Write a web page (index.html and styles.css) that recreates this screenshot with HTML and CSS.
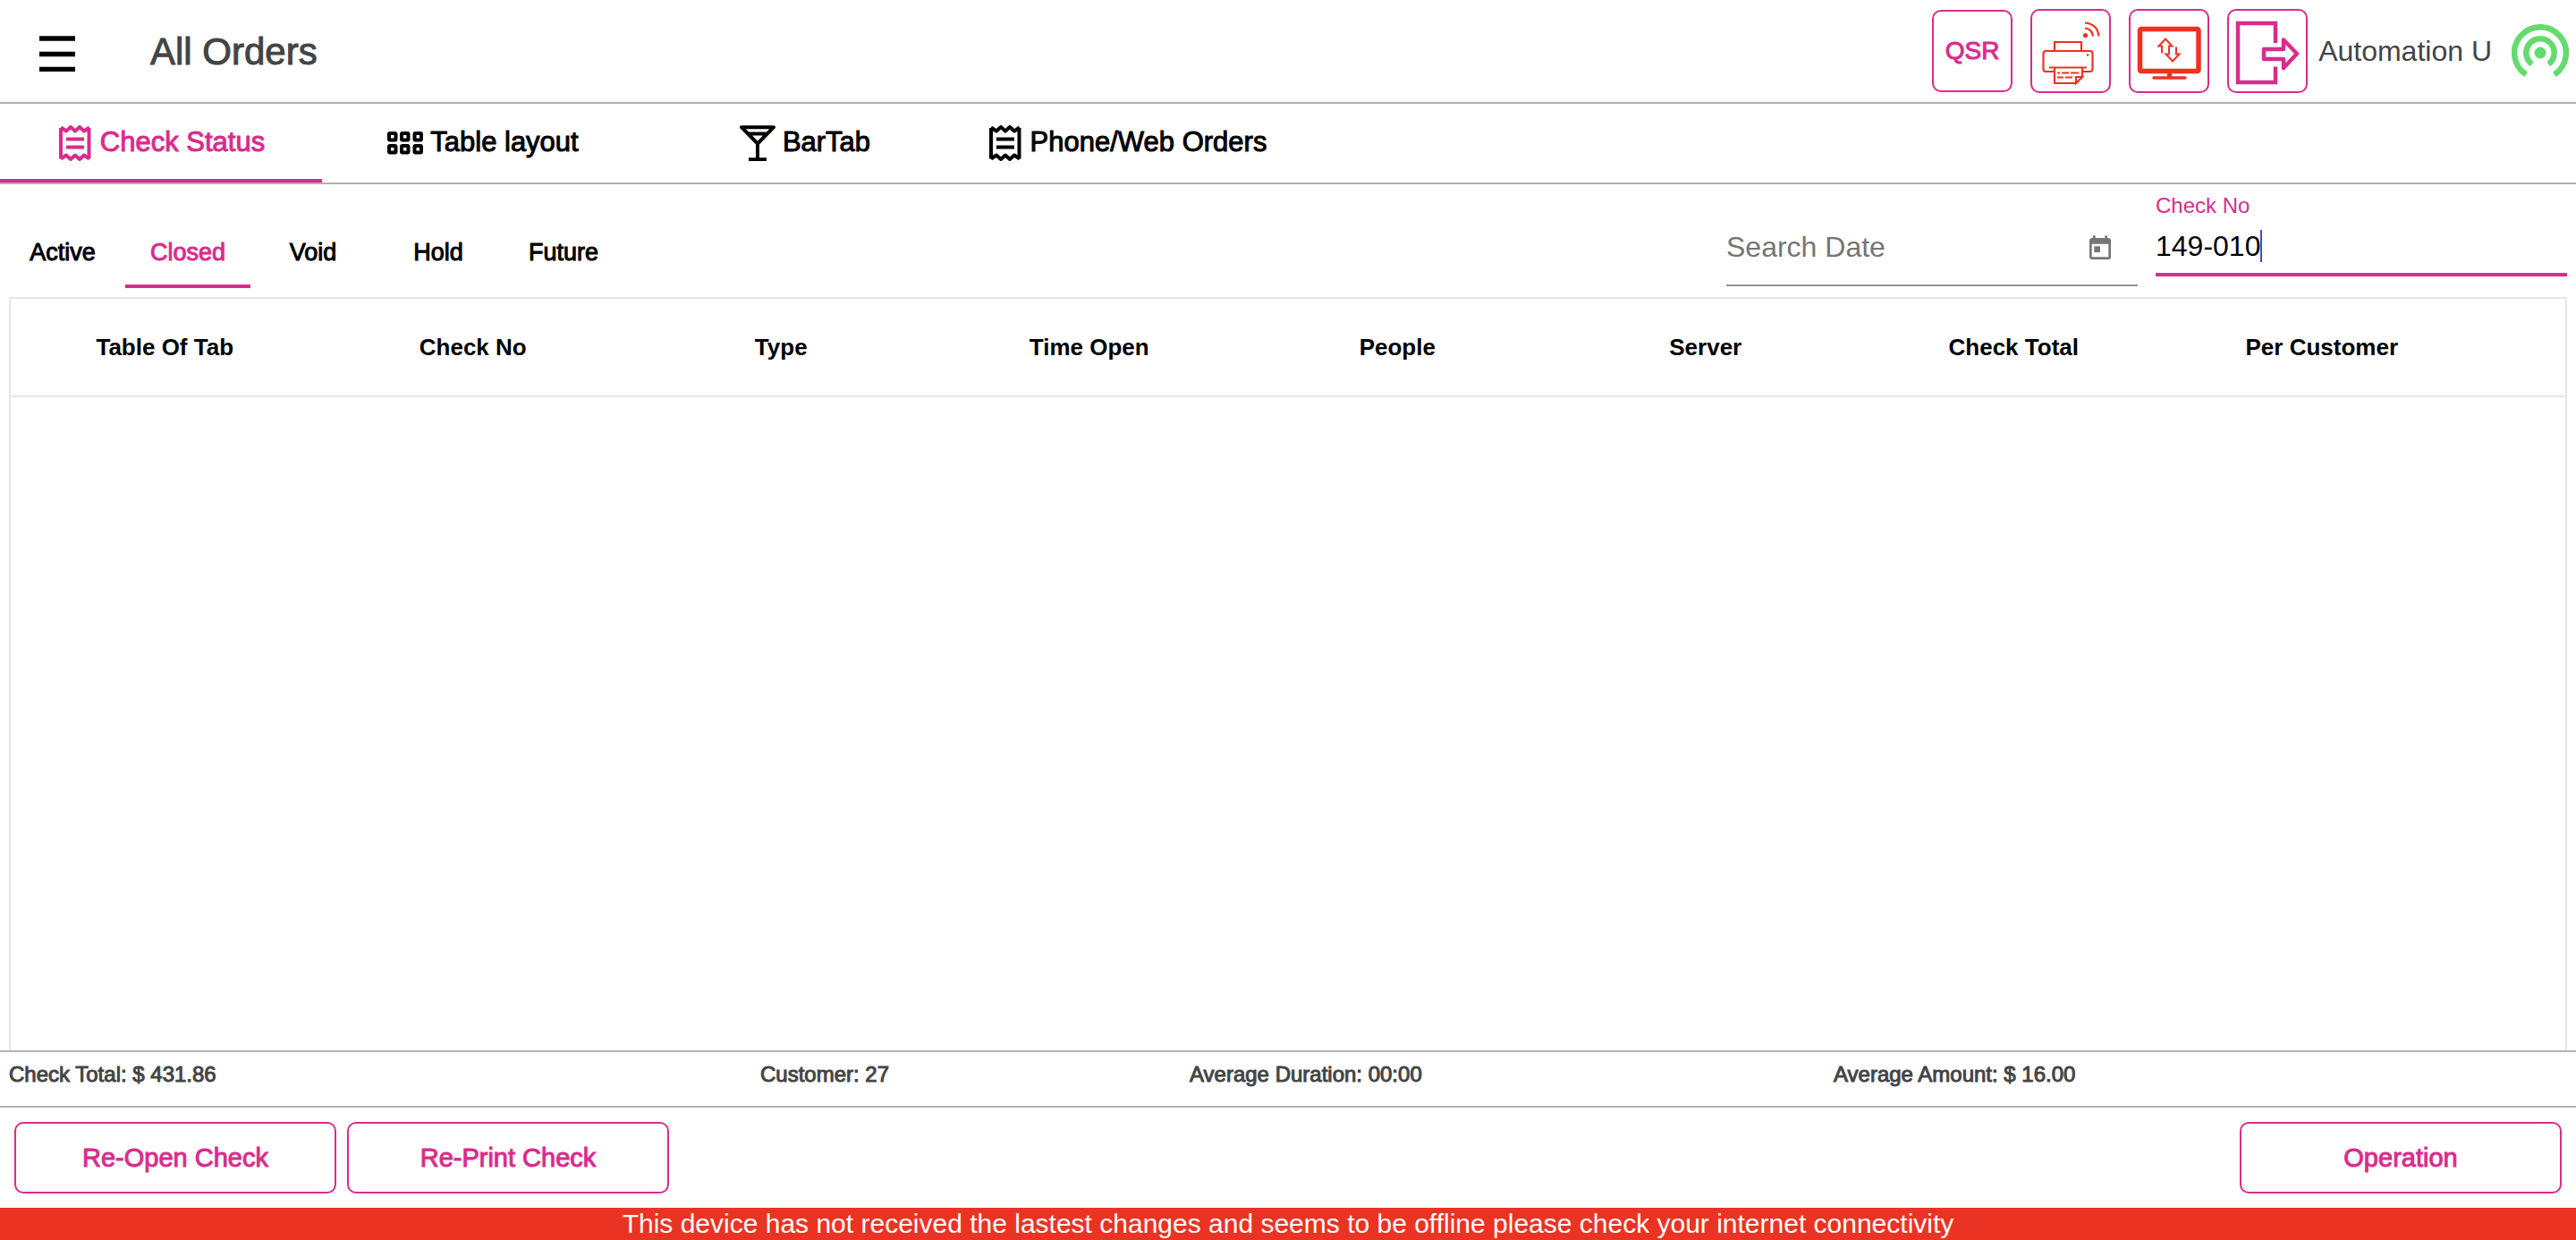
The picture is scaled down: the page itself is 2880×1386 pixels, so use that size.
FILE: index.html
```html
<!DOCTYPE html>
<html lang="en">
<head>
<meta charset="utf-8">
<meta name="viewport" content="width=device-width, initial-scale=1">
<title>All Orders</title>
<link rel="stylesheet" href="styles.css">
</head>
<body>
<svg class="sprite" aria-hidden="true">
  <symbol id="receipt" viewBox="0 0 40 40">
    <path d="M4 3v34.500M35.500 3v34.500" fill="none" stroke="currentColor" stroke-width="4"/>
    <path d="M4 2.500l6 4 5-4.500 5 4.500 5-4.500 5 4.500 6-4M4 37.500l6-4 5 4.500 5-4.500 5 4.500 5-4.500 6 4" fill="none" stroke="currentColor" stroke-width="4" stroke-linejoin="round"/>
    <path d="M10 15.500h20M10 24.500h20" stroke="currentColor" stroke-width="4"/>
  </symbol>
</svg>
<div class="app">
  <header class="topbar">
    <button class="menu" type="button" aria-label="Menu">
      <svg width="40" height="40" viewBox="0 0 40 40"><path d="M0 3h40M0 20.500h40M0 37.500h40" stroke="#000" stroke-width="5.500"/></svg>
    </button>
    <h1 class="title">All Orders</h1>
    <div class="tools">
      <button class="tool tool-text" type="button">QSR</button>
      <button class="tool" type="button" aria-label="Printer">
        <svg width="86" height="90" viewBox="2 2 86 90" fill="none" stroke="#ed3223" stroke-width="2.200">
          <path d="M27 47V37h30v10M28 70H17q-2.500 0-2.500-3V50q0-3 3-3h49q3 0 3 3v17q0 3-3 3h-9M21 65.500h42M27 66v17h24l7-7V66M51 83v-7h7z"/>
          <path d="M30 71.500h3M35 71.500h8M45 71.500h9M30 76.500h7M39 76.500h8" />
          <circle cx="64" cy="51.500" r="1.300" fill="#ed3223" stroke="none"/>
          <circle cx="61.500" cy="29.500" r="2.600" fill="#ed3223" stroke="none"/>
          <path d="M61 21.500q8 1 9 9M61 15.500q14 1 15.500 15"/>
        </svg>
      </button>
      <button class="tool" type="button" aria-label="Sync display">
        <svg width="86" height="90" viewBox="2 2 86 90" fill="none" stroke="#ed3223">
          <rect x="12.500" y="22.500" width="65.500" height="47" rx="1.500" stroke-width="5.500"/>
          <path d="M45.500 71v6" stroke-width="5"/>
          <path d="M28 77h35" stroke-width="3.500" stroke-linecap="round"/>
          <path d="M37 49.500v-8h-3.500l7.500-8 7.500 8H45v9h-3.500l7.500 8 7.500-8H53v-8" stroke-width="2"/>
        </svg>
      </button>
      <button class="tool" type="button" aria-label="Sign out">
        <svg width="86" height="90" viewBox="2 2 86 90" fill="none" stroke="#d92c8c" stroke-width="4.500">
          <path d="M54 38V16H12v66h42V64.500"/>
          <path d="M41 45h22V34.500L78 50 63 66V56H41z" stroke-linejoin="round"/>
        </svg>
      </button>
      <span class="user">Automation U</span>
      <svg class="signal" width="64" height="64" viewBox="0 0 64 64" fill="none" stroke="#64db6f" stroke-width="6.500">
        <circle cx="32" cy="32" r="6.500" fill="#64db6f" stroke="none"/>
        <path d="M22.800 44.600A15.700 15.700 0 1 1 41.200 44.600M16.200 56.300A28.900 28.900 0 1 1 47.800 56.300"/>
      </svg>
    </div>
  </header>

  <nav class="tabs">
    <a class="tab active" href="#status"><svg width="40" height="40"><use href="#receipt"/></svg>Check Status</a>
    <a class="tab" href="#layout"><svg width="40" height="40" viewBox="0 0 40 40" fill="none" stroke="currentColor" stroke-width="4"><rect x="2" y="9" width="7.500" height="7.500" rx="1"/><rect x="16" y="9" width="7.500" height="7.500" rx="1"/><rect x="30.500" y="9" width="7.500" height="7.500" rx="1"/><rect x="2" y="23" width="7.500" height="7.500" rx="1"/><rect x="16" y="23" width="7.500" height="7.500" rx="1"/><rect x="30.500" y="23" width="7.500" height="7.500" rx="1"/></svg>Table layout</a>
    <a class="tab" href="#bar"><svg width="40" height="40" viewBox="0 0 40 40" fill="none" stroke="currentColor" stroke-width="4" stroke-linejoin="round"><path d="M2 2.200h36L20 20.500zM8.500 9.500h23M20 20v18M10 38.200h20"/></svg>BarTab</a>
    <a class="tab" href="#phone"><svg width="40" height="40"><use href="#receipt"/></svg>Phone/Web Orders</a>
  </nav>

  <main class="content">
    <div class="filters">
      <nav class="subtabs">
        <a class="subtab" href="#active">Active</a>
        <a class="subtab active" href="#closed">Closed</a>
        <a class="subtab" href="#void">Void</a>
        <a class="subtab" href="#hold">Hold</a>
        <a class="subtab" href="#future">Future</a>
      </nav>
      <div class="search">
        <div class="field date-field">
          <input class="input" type="text" placeholder="Search Date" aria-label="Search Date">
          <button class="calendar" type="button" aria-label="Open calendar">
            <svg width="32" height="32" viewBox="0 0 24 24" fill="#757575"><path d="M19 3h-1V1h-2v2H8V1H6v2H5c-1.110 0-1.990.9-1.990 2L3 19c0 1.100.89 2 2 2h14c1.100 0 2-.9 2-2V5c0-1.100-.9-2-2-2zm0 16H5V8h14v11zM7 10h5v5H7z"/></svg>
          </button>
        </div>
        <div class="field check-field">
          <label class="label" for="check-no">Check No</label>
          <div class="entry"><input class="input fit" id="check-no" type="text" value="149-010"><span class="caret"></span></div>
        </div>
      </div>
    </div>

    <div class="list">
      <table class="orders">
        <thead>
          <tr>
            <th>Table Of Tab</th><th>Check No</th><th>Type</th><th>Time Open</th><th>People</th><th>Server</th><th>Check Total</th><th>Per Customer</th><td class="spacer"></td>
          </tr>
        </thead>
      </table>
    </div>
  </main>

  <section class="totals">
    <span>Check Total: $ 431.86</span>
    <span>Customer: 27</span>
    <span>Average Duration: 00:00</span>
    <span>Average Amount: $ 16.00</span>
  </section>

  <footer class="actions">
    <button class="action" type="button">Re-Open Check</button>
    <button class="action" type="button">Re-Print Check</button>
    <button class="action last" type="button">Operation</button>
  </footer>

  <p class="offline" role="alert">This device has not received the lastest changes and seems to be offline please check your internet connectivity</p>
</div>
</body>
</html>
```
FILE: styles.css
```css
* {
  box-sizing: border-box;
}

:root {
  --pink: #d92c8c;
  --line: #b0b0b0;
  --pale: #e6e6e6;
  --ink: #444;
}

body {
  margin: 0;
  background: #fff;
  color: #000;
  font-family: "Liberation Sans", Arial, sans-serif;
}

button {
  padding: 0;
  border: 0;
  background: none;
  color: inherit;
  font: inherit;
}

a {
  color: inherit;
  text-decoration: none;
}

svg {
  display: block;
  flex: none;
}

.sprite {
  position: absolute;
  width: 0;
  height: 0;
}

.app {
  display: flex;
  flex-direction: column;
  min-height: 100vh;
}

.topbar {
  display: flex;
  align-items: center;
  height: 116px;
  padding: 0 8px 0 44px;
  border-bottom: 2px solid var(--line);
}

.menu {
  margin-top: 6px;
}

.title {
  margin: 2px 0 0 84px;
  color: var(--ink);
  font-size: 42px;
  font-weight: 500;
  -webkit-text-stroke: 1px currentColor;
}

.tools {
  display: flex;
  align-items: center;
  gap: 20px;
  margin-left: auto;
}

.tool {
  width: 90px;
  height: 94px;
  border: 2px solid var(--pink);
  border-radius: 10px;
}

.tool-text {
  height: 92px;
  color: var(--pink);
  font-size: 28px;
  -webkit-text-stroke: 1px currentColor;
}

.user {
  margin-left: -8px;
  color: var(--ink);
  font-size: 32px;
}

.signal {
  margin: 4px 0 0 2px;
}

.tabs {
  display: flex;
  height: 90px;
  border-bottom: 2px solid var(--line);
}

.tab {
  display: flex;
  align-items: center;
  justify-content: center;
  gap: 8px;
  width: 360px;
  padding-top: 2px;
  border-bottom: 4px solid transparent;
  font-size: 31px;
  -webkit-text-stroke: 1px currentColor;
}

.tab svg {
  margin-top: 2px;
}

.tab.active,
.subtab.active {
  border-color: var(--pink);
  color: var(--pink);
}

.content {
  display: flex;
  flex: 1;
  flex-direction: column;
  padding: 0 10px;
}

.filters {
  display: flex;
  justify-content: space-between;
  height: 126px;
}

.subtabs {
  display: flex;
  align-self: flex-end;
  margin: 0 0 10px -10px;
}

.subtab {
  width: 140px;
  height: 80px;
  border-bottom: 4px solid transparent;
  font-size: 27px;
  line-height: 80px;
  text-align: center;
  -webkit-text-stroke: 1px currentColor;
}

.search {
  display: flex;
  align-items: flex-start;
  gap: 20px;
}

.field {
  width: 460px;
}

.date-field {
  display: flex;
  align-items: center;
  height: 114px;
  padding: 32px 26px 0 0;
  border-bottom: 2px solid #949494;
}

.calendar {
  margin-top: 4px;
}

.check-field {
  height: 103px;
  padding-top: 10px;
  border-bottom: 4px solid var(--pink);
}

.label {
  display: block;
  color: var(--pink);
  font-size: 24px;
  line-height: 28px;
}

.entry {
  display: flex;
  align-items: center;
  margin-top: 13px;
}

.input {
  flex: 1;
  min-width: 0;
  padding: 0;
  border: 0;
  outline: 0;
  background: none;
  color: #000;
  font: inherit;
  font-size: 32px;
  line-height: 36px;
}

.input::placeholder {
  color: #757575;
  opacity: 1;
}

.fit {
  flex: none;
  field-sizing: content;
}

.caret {
  width: 2px;
  height: 36px;
  background: #3f51b5;
}

.date-field {
  padding-bottom: 4px;
}

.list {
  flex: 1;
  border: 2px solid var(--pale);
  border-bottom: 0;
}

.orders {
  width: 100%;
  border-collapse: collapse;
  table-layout: fixed;
}

.orders th {
  height: 109px;
  padding: 0;
  border-bottom: 2px solid var(--pale);
  font-size: 26px;
  font-weight: 700;
}

.spacer {
  width: 100px;
  border-bottom: 2px solid var(--pale);
}

.totals {
  display: grid;
  grid-template-columns: 14fr 8fr 12fr 14fr;
  height: 64px;
  padding-top: 9px;
  border: solid var(--line);
  border-width: 2px 0;
  color: var(--ink);
  font-size: 24px;
  line-height: 32px;
  -webkit-text-stroke: 1px currentColor;
}

.totals span {
  padding-left: 10px;
}

.actions {
  display: flex;
  gap: 12px;
  padding: 16px;
}

.action {
  width: 360px;
  height: 80px;
  border: 2px solid var(--pink);
  border-radius: 10px;
  color: var(--pink);
  font-size: 29px;
  -webkit-text-stroke: 1px currentColor;
}

.last {
  margin-left: auto;
}

.offline {
  margin: 0;
  background: #eb3323;
  color: #fff;
  font-size: 30px;
  line-height: 36px;
  text-align: center;
}
```
